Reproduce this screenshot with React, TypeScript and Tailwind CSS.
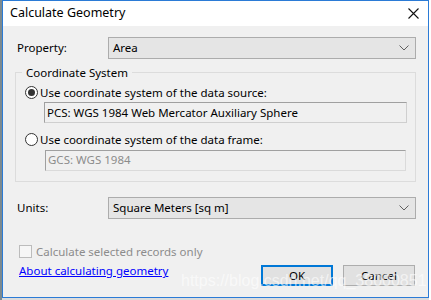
import React from 'react';

const font = { fontFamily: '"Segoe UI", "Noto Sans", Arial, sans-serif' };

const Chevron: React.FC = () => (
  <svg width="10" height="6" viewBox="0 0 10 6" className="text-[#606060]">
    <path d="M0.5 0.5 L5 5 L9.5 0.5" fill="none" stroke="currentColor" strokeWidth="1" />
  </svg>
);

const Select: React.FC<{ value: string }> = ({ value }) => (
  <div className="flex-1 h-[22px] border border-[#acacac] bg-[#e5e5e5] flex items-center justify-between pl-[4px] pr-[6px]">
    <span>{value}</span>
    <Chevron />
  </div>
);

const Radio: React.FC<{ checked?: boolean }> = ({ checked }) => (
  <span className="w-[13px] h-[13px] rounded-full border border-[#333] bg-white flex items-center justify-center shrink-0">
    {checked && <span className="w-[7px] h-[7px] rounded-full bg-[#333]" />}
  </span>
);

const App: React.FC = () => {
  return (
    <div className="w-[431px] h-[300px] bg-[#dcdcdc] relative overflow-hidden text-[11.5px] text-black" style={font}>
      <div className="absolute left-0 top-0 w-[2px] h-[300px] bg-[#7c8a90]" />
      <div className="absolute right-0 top-0 w-[2px] h-[300px] bg-white" />
      <div className="ml-[2px] w-[427px] h-[298px] border border-[#2b7bd6] bg-[#f0f0f0] flex flex-col">
        <div className="h-[25px] bg-white flex items-center justify-between pl-[7px] pr-[9px]">
          <span className="text-[12.5px]">Calculate Geometry</span>
          <svg width="11" height="11" viewBox="0 0 11 11">
            <path d="M0.5 0.5 L10.5 10.5 M10.5 0.5 L0.5 10.5" stroke="#111" strokeWidth="1.1" />
          </svg>
        </div>

        <div className="flex flex-col px-[12px]">
          <div className="flex items-center mt-[11px]">
            <span className="w-[93px] pl-[2px]">Property:</span>
            <Select value="Area" />
          </div>

          <div className="relative mt-[13px] border border-[#dcdcdc] h-[110px] pl-[9px] pr-[8px] pt-[11px]">
            <span className="absolute -top-[9px] left-[6px] bg-[#f0f0f0] px-[4px]">Coordinate System</span>
            <div className="flex items-center gap-[2px]">
              <Radio checked />
              <span>Use coordinate system of the data source:</span>
            </div>
            <div className="ml-[19px] mt-[1px] h-[21px] border border-[#cfcfcf] bg-[#f0f0f0] flex items-center pl-[2px] border-t-[#a0a0a0] border-l-[#a0a0a0]">
              PCS: WGS 1984 Web Mercator Auxiliary Sphere
            </div>
            <div className="flex items-center gap-[2px] mt-[8px]">
              <Radio />
              <span>Use coordinate system of the data frame:</span>
            </div>
            <div className="ml-[20px] mt-[1px] mr-[1px] h-[21px] border border-[#dadada] bg-[#f0f0f0] flex items-center pl-[2px] text-[#8c8c8c] border-t-[#a0a0a0] border-l-[#a0a0a0]">
              GCS: WGS 1984
            </div>
          </div>

          <div className="flex items-center mt-[15px]">
            <span className="w-[93px] pl-[2px]">Units:</span>
            <Select value="Square Meters [sq m]" />
          </div>

          <div className="flex items-center gap-[4px] mt-[24px] pl-[4px]">
            <span className="w-[13px] h-[13px] border border-[#bcbcbc] bg-[#f6f6f6]" />
            <span className="text-[#8c8c8c]">Calculate selected records only</span>
          </div>

          <div className="flex items-start justify-between mt-[5px] pl-[4px]">
            <span className="text-[#0000ff] underline -mt-[3px]">About calculating geometry</span>
            <div className="flex gap-[10px] pr-[1px]">
              <button className="w-[72px] h-[21px] border-2 border-[#0078d7] bg-[#e1e1e1] flex items-center justify-center">OK</button>
              <button className="w-[72px] h-[21px] border border-[#adadad] bg-[#e1e1e1] flex items-center justify-center">Cancel</button>
            </div>
          </div>
        </div>
      </div>
      <span className="absolute left-[181px] top-[269px] text-[16px] text-white/60 pointer-events-none" style={{ fontFamily: 'Arial, "Liberation Sans", sans-serif' }}>
        https://blog.csdn.net/qq_38000851
      </span>
    </div>
  );
};

export default App;
